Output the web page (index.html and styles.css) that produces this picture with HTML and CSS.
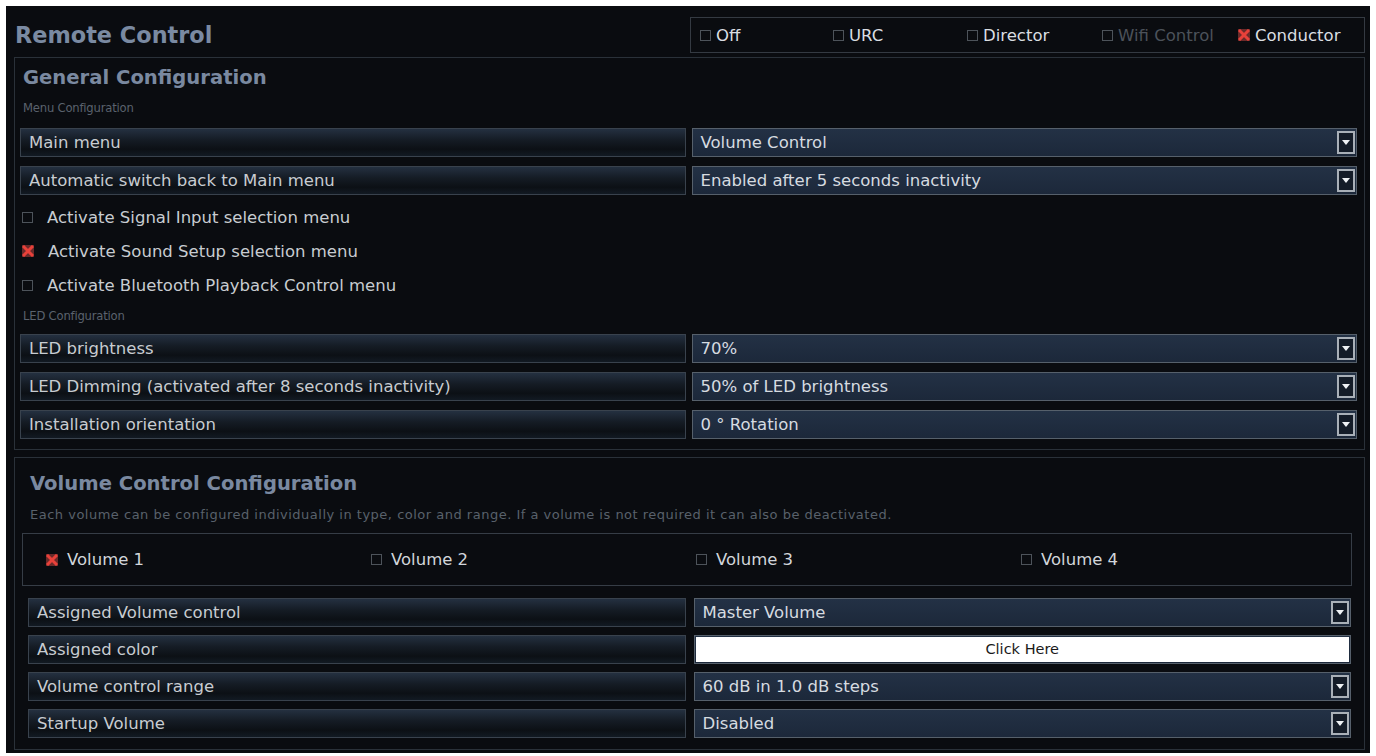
FILE: index.html
```html
<!DOCTYPE html>
<html lang="en">
<head>
<meta charset="utf-8">
<title>Remote Control</title>
<link rel="stylesheet" href="styles.css">
</head>
<body>
<div class="app">
  <header class="topbar">
    <h1 class="title">Remote Control</h1>
    <div class="modes">
      <div class="mode"><span class="cb"></span>Off</div>
      <div class="mode"><span class="cb"></span>URC</div>
      <div class="mode"><span class="cb"></span>Director</div>
      <div class="mode dim"><span class="cb"></span>Wifi Control</div>
      <div class="mode"><span class="cb on"><svg viewBox="0 0 12 12"><path d="M2 2 L10 10 M10 2 L2 10"/></svg></span>Conductor</div>
    </div>
  </header>

  <section class="panel general">
    <h2 class="ptitle">General Configuration</h2>
    <div class="sub">Menu Configuration</div>
    <div class="row"><div class="lbl">Main menu</div><div class="val">Volume Control<span class="dd"></span></div></div>
    <div class="row"><div class="lbl">Automatic switch back to Main menu</div><div class="val">Enabled after 5 seconds inactivity<span class="dd"></span></div></div>
    <div class="checks">
      <div class="check"><span class="cb"></span>Activate Signal Input selection menu</div>
      <div class="check"><span class="cb on"><svg viewBox="0 0 12 12"><path d="M2 2 L10 10 M10 2 L2 10"/></svg></span>Activate Sound Setup selection menu</div>
      <div class="check"><span class="cb"></span>Activate Bluetooth Playback Control menu</div>
    </div>
    <div class="sub led">LED Configuration</div>
    <div class="row"><div class="lbl">LED brightness</div><div class="val">70%<span class="dd"></span></div></div>
    <div class="row"><div class="lbl">LED Dimming (activated after 8 seconds inactivity)</div><div class="val">50% of LED brightness<span class="dd"></span></div></div>
    <div class="row"><div class="lbl">Installation orientation</div><div class="val">0 ° Rotation<span class="dd"></span></div></div>
  </section>

  <section class="panel volume">
    <h2 class="ptitle vt">Volume Control Configuration</h2>
    <div class="desc">Each volume can be configured individually in type, color and range. If a volume is not required it can also be deactivated.</div>
    <div class="vols">
      <div class="vol"><span class="cb on"><svg viewBox="0 0 12 12"><path d="M2 2 L10 10 M10 2 L2 10"/></svg></span>Volume 1</div>
      <div class="vol"><span class="cb"></span>Volume 2</div>
      <div class="vol"><span class="cb"></span>Volume 3</div>
      <div class="vol"><span class="cb"></span>Volume 4</div>
    </div>
    <div class="vrows">
      <div class="row"><div class="lbl">Assigned Volume control</div><div class="val">Master Volume<span class="dd"></span></div></div>
      <div class="row"><div class="lbl">Assigned color</div><div class="val color"><span class="click">Click Here</span></div></div>
      <div class="row"><div class="lbl">Volume control range</div><div class="val">60 dB in 1.0 dB steps<span class="dd"></span></div></div>
      <div class="row"><div class="lbl">Startup Volume</div><div class="val">Disabled<span class="dd"></span></div></div>
    </div>
  </section>
</div>
</body>
</html>
```

FILE: styles.css
```css
* { box-sizing: border-box; }
html, body { margin: 0; padding: 0; background: #ffffff; }
body { font-family: "DejaVu Sans", "Noto Sans", sans-serif; }

.app {
  margin: 6px 6px 0 6px;
  height: 747px;
  background: #0a0c10;
  overflow: hidden;
}

.topbar {
  display: flex;
  justify-content: space-between;
  align-items: flex-start;
  height: 51px;
  padding: 11px 5px 4px 9px;
}
.title {
  margin: 0;
  font-size: 22.4px;
  line-height: 36px;
  font-weight: bold;
  color: #7a8aa2;
}
.modes {
  width: 675px;
  height: 36px;
  border: 1px solid #343a42;
  display: grid;
  grid-template-columns: 133px 134px 135px 136px 1fr;
  align-items: center;
  padding-left: 9px;
}
.mode {
  display: flex;
  align-items: center;
  gap: 5px;
  font-size: 16.5px;
  color: #dadee2;
  white-space: nowrap;
}
.mode.dim { color: #4c525a; }

.cb {
  width: 11px;
  height: 11px;
  border: 1px solid #4d535a;
  flex: none;
  display: inline-block;
}
.cb.on {
  border: none;
  width: 12px;
  height: 12px;
  background: #6b2a2a;
}
.cb svg { width: 12px; height: 12px; display: block; }
.cb svg path { stroke: #e8413a; stroke-width: 3; stroke-linecap: square; fill: none; }

.panel {
  border: 1px solid #2a3139;
  margin: 0 5px 0 8px;
}
.general {
  padding: 8px 7px 10px 5px;
}
.ptitle {
  margin: 0;
  font-size: 19.6px;
  line-height: 24px;
  font-weight: bold;
  color: #7a89a0;
  padding-left: 3px;
}
.sub {
  margin-top: 10px;
  font-size: 11.6px;
  line-height: 16px;
  color: #5a626d;
  padding-left: 3px;
  letter-spacing: -0.2px;
}
.sub.led { margin-top: 6px; }
.general .sub + .row { margin-top: 12px; }
.sub.led + .row { margin-top: 10px; }

.row {
  display: grid;
  grid-template-columns: 1fr 1fr;
  column-gap: 6px;
  height: 29px;
  margin-top: 9px;
}
.lbl {
  border: 1px solid #39424d;
  background: linear-gradient(180deg, #243040 0%, #151c25 40%, #0c1015 75%, #121a23 100%);
  color: #c8ccd1;
  font-size: 16.5px;
  line-height: 27px;
  padding-left: 8px;
  white-space: nowrap;
  overflow: hidden;
}
.val {
  position: relative;
  border: 1px solid #56606b;
  background: linear-gradient(180deg, #233145 0%, #1c283a 100%);
  color: #d6dbe0;
  font-size: 16.5px;
  line-height: 27px;
  padding-left: 8px;
  white-space: nowrap;
}
.dd {
  position: absolute;
  right: 1px;
  top: 2px;
  bottom: 2px;
  width: 18px;
  border: 2px solid #a9b0b8;
  background: #141c28;
}
.dd::after {
  content: "";
  position: absolute;
  left: 50%;
  top: 50%;
  margin-left: -4px;
  margin-top: -3px;
  border-left: 4px solid transparent;
  border-right: 4px solid transparent;
  border-top: 5px solid #eef1f4;
}

.checks { margin-top: 5px; }
.check {
  display: flex;
  align-items: center;
  gap: 14px;
  height: 34px;
  padding-left: 2px;
  font-size: 16.5px;
  color: #c8ccd1;
}

.volume {
  margin-top: 7px;
  padding: 14px 12px 11px 7px;
}
.vt { padding-left: 8px; }
.desc {
  margin-top: 11px;
  padding-left: 8px;
  font-size: 13px;
  letter-spacing: 0.5px;
  line-height: 16px;
  color: #59616b;
  white-space: nowrap;
}
.vols {
  margin-top: 10px;
  height: 53px;
  border: 1px solid #363d46;
  display: grid;
  grid-template-columns: repeat(4, 1fr);
  align-items: center;
  padding: 0 5px 0 23px;
}
.vol {
  display: flex;
  align-items: center;
  gap: 9px;
  font-size: 16.5px;
  color: #d2d6db;
}
.vrows { margin: 12px 1px 0 6px; }
.vrows .row { margin-top: 8px; column-gap: 8px; }
.vrows .row:first-child { margin-top: 0; }
.val.color { padding: 1px 1px; }
.click {
  display: block;
  height: 100%;
  background: #ffffff;
  color: #1a1a1a;
  text-align: center;
  font-size: 14.5px;
  line-height: 25px;
}
```
